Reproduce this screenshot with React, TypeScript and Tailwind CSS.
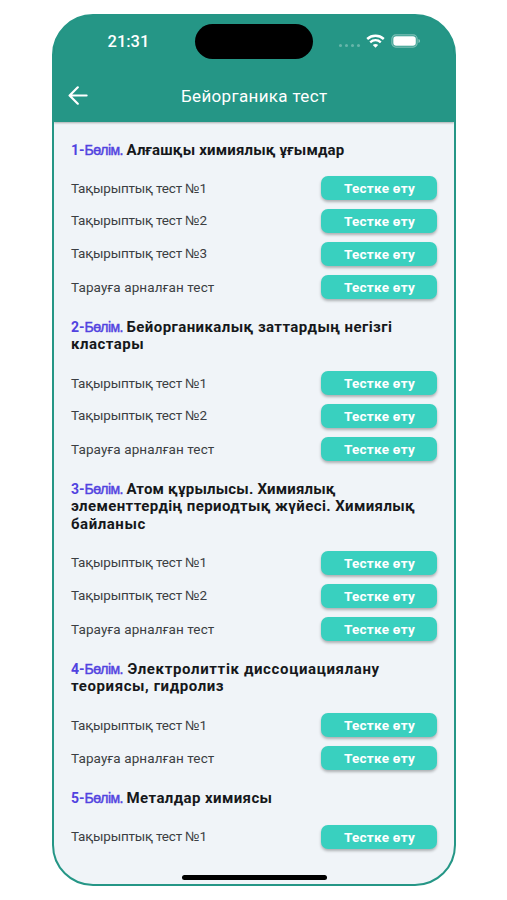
import { clsx } from "clsx";

type Line = { text: string; className: string };

const sections: { lines: Line[]; tests: string[] }[] = [
  {
    lines: [{ text: "Алғашқы химиялық ұғымдар", className: "tracking-[0.17px]" }],
    tests: [
      "Тақырыптық тест №1",
      "Тақырыптық тест №2",
      "Тақырыптық тест №3",
      "Тарауға арналған тест",
    ],
  },
  {
    lines: [
      { text: "Бейорганикалық заттардың негізгі", className: "tracking-[0.42px]" },
      { text: "кластары", className: "tracking-[0.5px]" },
    ],
    tests: ["Тақырыптық тест №1", "Тақырыптық тест №2", "Тарауға арналған тест"],
  },
  {
    lines: [
      { text: "Атом құрылысы. Химиялық", className: "tracking-[0.18px]" },
      { text: "элементтердің периодтық жүйесі. Химиялық", className: "tracking-[0.39px]" },
      { text: "байланыс", className: "tracking-[0.55px]" },
    ],
    tests: ["Тақырыптық тест №1", "Тақырыптық тест №2", "Тарауға арналған тест"],
  },
  {
    lines: [
      { text: "Электролиттік диссоциациялану", className: "pl-[1px] tracking-[0.64px]" },
      { text: "теориясы, гидролиз", className: "tracking-[0.6px]" },
    ],
    tests: ["Тақырыптық тест №1", "Тарауға арналған тест"],
  },
  {
    lines: [{ text: "Металдар химиясы", className: "tracking-[0.4px]" }],
    tests: ["Тақырыптық тест №1"],
  },
];

function StatusBar() {
  return (
    <div className="flex h-[34px] items-center">
      <span className="mt-[2px] ml-[55.5px] w-[87.5px] text-[16.5px] font-medium text-white">
        21:31
      </span>
      <div className="h-[35px] w-[118px] shrink-0 rounded-full bg-black" />
      <div className="mt-[9px] ml-[26px] flex gap-[3px]">
        {[0, 1, 2, 3].map((dot) => (
          <span key={dot} className="size-[3px] rounded-full bg-white/30" />
        ))}
      </div>
      <svg className="-mt-[1px] ml-[6px] h-[14px] w-[19px]" viewBox="0 0 19 14" fill="none">
        <path d="M1.2 5C6 .8 13 .8 17.8 5" stroke="white" strokeWidth="2.5" />
        <path d="M4.2 8.3c3-2.8 7.6-2.8 10.6 0" stroke="white" strokeWidth="2.3" />
        <path d="M6.8 11c1.5-1.5 3.900-1.500 5.400 0L9.500 13.700z" fill="white" />
      </svg>
      <svg className="ml-[6px] h-[14px] w-[30px]" viewBox="0 0 30 14" fill="none">
        <rect x=".9" y=".9" width="25.2" height="12.2" rx="4" stroke="white" strokeOpacity=".4" strokeWidth="1.2" />
        <rect x="2.3" y="2.2" width="22.5" height="9.6" rx="2.8" fill="white" />
        <path d="M27.5 5c2 .7 2 3.3 0 4z" fill="white" fillOpacity=".5" />
      </svg>
    </div>
  );
}

function Header() {
  return (
    <header className="z-10 h-[106px] shrink-0 bg-[#259686] pt-[8px] shadow-[0_1px_2px_rgba(0,0,0,0.3)]">
      <div className="-mx-[2px]">
        <StatusBar />
        <div className="mt-[20px] flex h-[34px] items-center">
          <button className="ml-[16px] w-[20px]" aria-label="Back">
            <svg className="h-[20px] w-[20px]" viewBox="0 0 20 20" fill="none">
              <path
                d="M18.6 10.5H2M9.8 2.3L1.6 10.5l8.200 8.200"
                stroke="white"
                strokeWidth="2.2"
                strokeLinecap="round"
                strokeLinejoin="round"
              />
            </svg>
          </button>
          <h1 className="mt-[3px] ml-[93px] text-[17px] tracking-[0.34px] whitespace-nowrap text-white">
            Бейорганика тест
          </h1>
        </div>
      </div>
    </header>
  );
}

function TestName({ name }: { name: string }) {
  const [label, num] = name.split("№");

  return (
    <span
      className={clsx(
        "text-[13.5px] leading-[20px] whitespace-nowrap text-[#3b3e42]",
        num ? "tracking-[-0.2px]" : "tracking-[0.12px]"
      )}
    >
      {label}
      {num && <span className="font-['Liberation_Sans',sans-serif]">№</span>}
      {num}
    </span>
  );
}

export default function App() {
  return (
    <div className="h-[900px] w-[507px] overflow-hidden bg-white pt-[14px] pl-[52px] font-['Roboto','Liberation_Sans',sans-serif]">
      <div className="flex h-[872px] w-[404px] flex-col overflow-hidden rounded-[41px] border-2 border-[#259686] bg-[#259686]">
        <Header />
        <main className="flex-1 bg-[#f0f4f8] pt-[19.5px] pr-[17px] pl-[17px]">
          {sections.map((section, i) => (
            <section key={i} className="mb-[15.6px]">
              <h2 className="mb-[12.5px] text-[15px] leading-[17.8px] font-bold whitespace-nowrap text-[#16181b]">
                {section.lines.map((line, n) => (
                  <div key={line.text} className="flex">
                    {n === 0 && (
                      <span className="w-[55.5px] shrink-0 text-[14px] text-[#5142e0]">
                        {i + 1}-
                        <span className="font-['Liberation_Sans',sans-serif] font-normal tracking-[-0.6px] [-webkit-text-stroke:0.45px_#5142e0]">
                          Бөлім.
                        </span>
                      </span>
                    )}
                    <span className={line.className}>{line.text}</span>
                  </div>
                ))}
              </h2>
              {section.tests.map((test) => (
                <div key={test} className="flex h-[32.8px] items-center justify-between">
                  <TestName name={test} />
                  <button className="h-[24px] w-[116px] rounded-[7px] bg-[#39d0bf] pl-[1px] text-[13.5px] leading-[24px] font-bold tracking-[0.25px] text-white shadow-[0_2px_3px_rgba(0,0,0,0.28)]">
                    Тестке өту
                  </button>
                </div>
              ))}
            </section>
          ))}
        </main>
        <div className="shrink-0 bg-[#f0f4f8] pb-[4px]">
          <div className="mx-auto h-[5px] w-[145px] rounded-full bg-black" />
        </div>
      </div>
    </div>
  );
}
